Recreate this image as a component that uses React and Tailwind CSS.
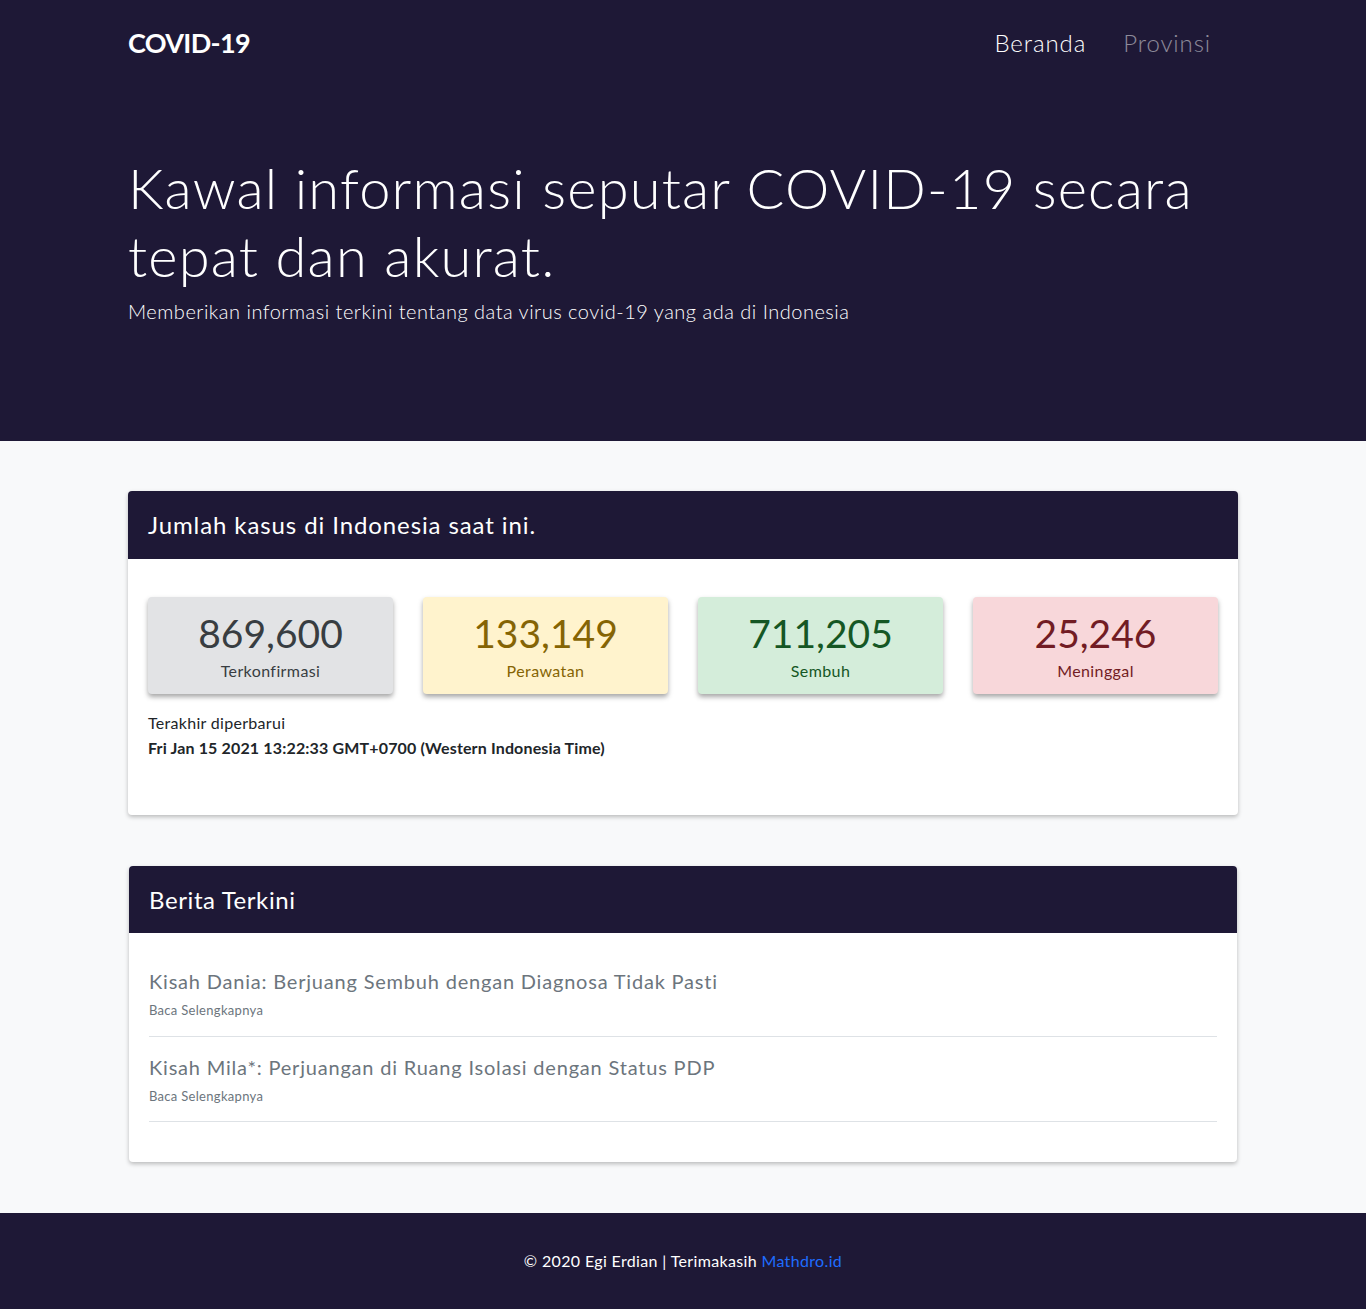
const stats = [
  { value: '869,600', label: 'Terkonfirmasi', box: 'bg-[#e2e3e5] text-[#383d41]' },
  { value: '133,149', label: 'Perawatan', box: 'bg-[#fff3cd] text-[#856404]' },
  { value: '711,205', label: 'Sembuh', box: 'bg-[#d4edda] text-[#155724]' },
  { value: '25,246', label: 'Meninggal', box: 'bg-[#f8d7da] text-[#721c24]' },
];

const news = [
  'Kisah Dania: Berjuang Sembuh dengan Diagnosa Tidak Pasti',
  'Kisah Mila*: Perjuangan di Ruang Isolasi dengan Status PDP',
];

export default function App() {
  return (
    <div className="min-h-[1309px] bg-[#f8f9fa] font-['Lato','Noto_Sans',sans-serif] flex flex-col">
      {/* Navbar + hero */}
      <header className="bg-[#1e1836] text-white">
        <nav className="w-[1110px] mx-auto h-[86px] flex items-center justify-between">
          <span className="text-[27px] font-bold tracking-tight">COVID-19</span>
          <div className="flex items-center gap-[37px] text-[24px] font-light tracking-[0.9px] pr-[27px]">
            <a className="text-white">Beranda</a>
            <a className="text-white/50">Provinsi</a>
          </div>
        </nav>
        <div className="w-[1110px] mx-auto pt-[68px] pb-[115px]">
          <h1 className="text-[56px] font-light leading-[68px] tracking-[1.2px]">
            Kawal informasi seputar COVID-19 secara tepat dan akurat.
          </h1>
          <p className="text-[20px] font-light tracking-[0.5px] mt-[6px]">
            Memberikan informasi terkini tentang data virus covid-19 yang ada di Indonesia
          </p>
        </div>
      </header>

      <main className="w-[1110px] mx-auto pt-[50px] pb-[50px] flex flex-col gap-[51px]">
        {/* Jumlah kasus */}
        <section className="bg-white rounded shadow-[0_2px_4px_rgba(0,0,0,0.25)] overflow-hidden">
          <div className="bg-[#1e1836] text-white h-[68px] px-5 flex items-center">
            <h2 className="text-[24px] tracking-[0.9px]">Jumlah kasus di Indonesia saat ini.</h2>
          </div>
          <div className="px-5 pt-[38px] pb-[55px]">
            <div className="grid grid-cols-4 gap-[30px]">
              {stats.map((s) => (
                <div key={s.label} className={`${s.box} rounded h-[97px] flex flex-col items-center justify-center shadow-[0_3px_5px_rgba(0,0,0,0.35)]`}>
                  <p className="text-[39px] leading-[44px] mt-[2px]">{s.value}</p>
                  <p className="text-[16px] tracking-[0.4px] mt-[4px]">{s.label}</p>
                </div>
              ))}
            </div>
            <p className="text-[16px] text-[#212529] tracking-[0.3px] mt-[17px]">Terakhir diperbarui</p>
            <p className="text-[16px] font-bold text-[#212529] tracking-[0.15px] mt-[1px]">
              Fri Jan 15 2021 13:22:33 GMT+0700 (Western Indonesia Time)
            </p>
          </div>
        </section>

        {/* Berita */}
        <section className="bg-white rounded shadow-[0_2px_4px_rgba(0,0,0,0.25)] overflow-hidden mx-px">
          <div className="bg-[#1e1836] text-white h-[67px] px-5 flex items-center">
            <h2 className="text-[24px] tracking-[0.6px]">Berita Terkini</h2>
          </div>
          <div className="px-5 pt-[33px] pb-[40px]">
            {news.map((n) => (
              <div key={n} className="border-b border-[#dee2e6] pb-[15px] mb-[15px] last:mb-0">
                <p className="text-[20px] text-[#6c757d] tracking-[0.8px]">{n}</p>
                <p className="text-[13px] text-[#6c757d] tracking-[0.3px] mt-[5px]">Baca Selengkapnya</p>
              </div>
            ))}
          </div>
        </section>
      </main>

      <footer className="bg-[#1e1836] text-white h-[96px] flex items-center justify-center mt-auto">
        <p className="text-[16px] tracking-[0.35px]">
          © 2020 Egi Erdian | Terimakasih <a className="text-[#1e6cff]">Mathdro.id</a>
        </p>
      </footer>
    </div>
  );
}
